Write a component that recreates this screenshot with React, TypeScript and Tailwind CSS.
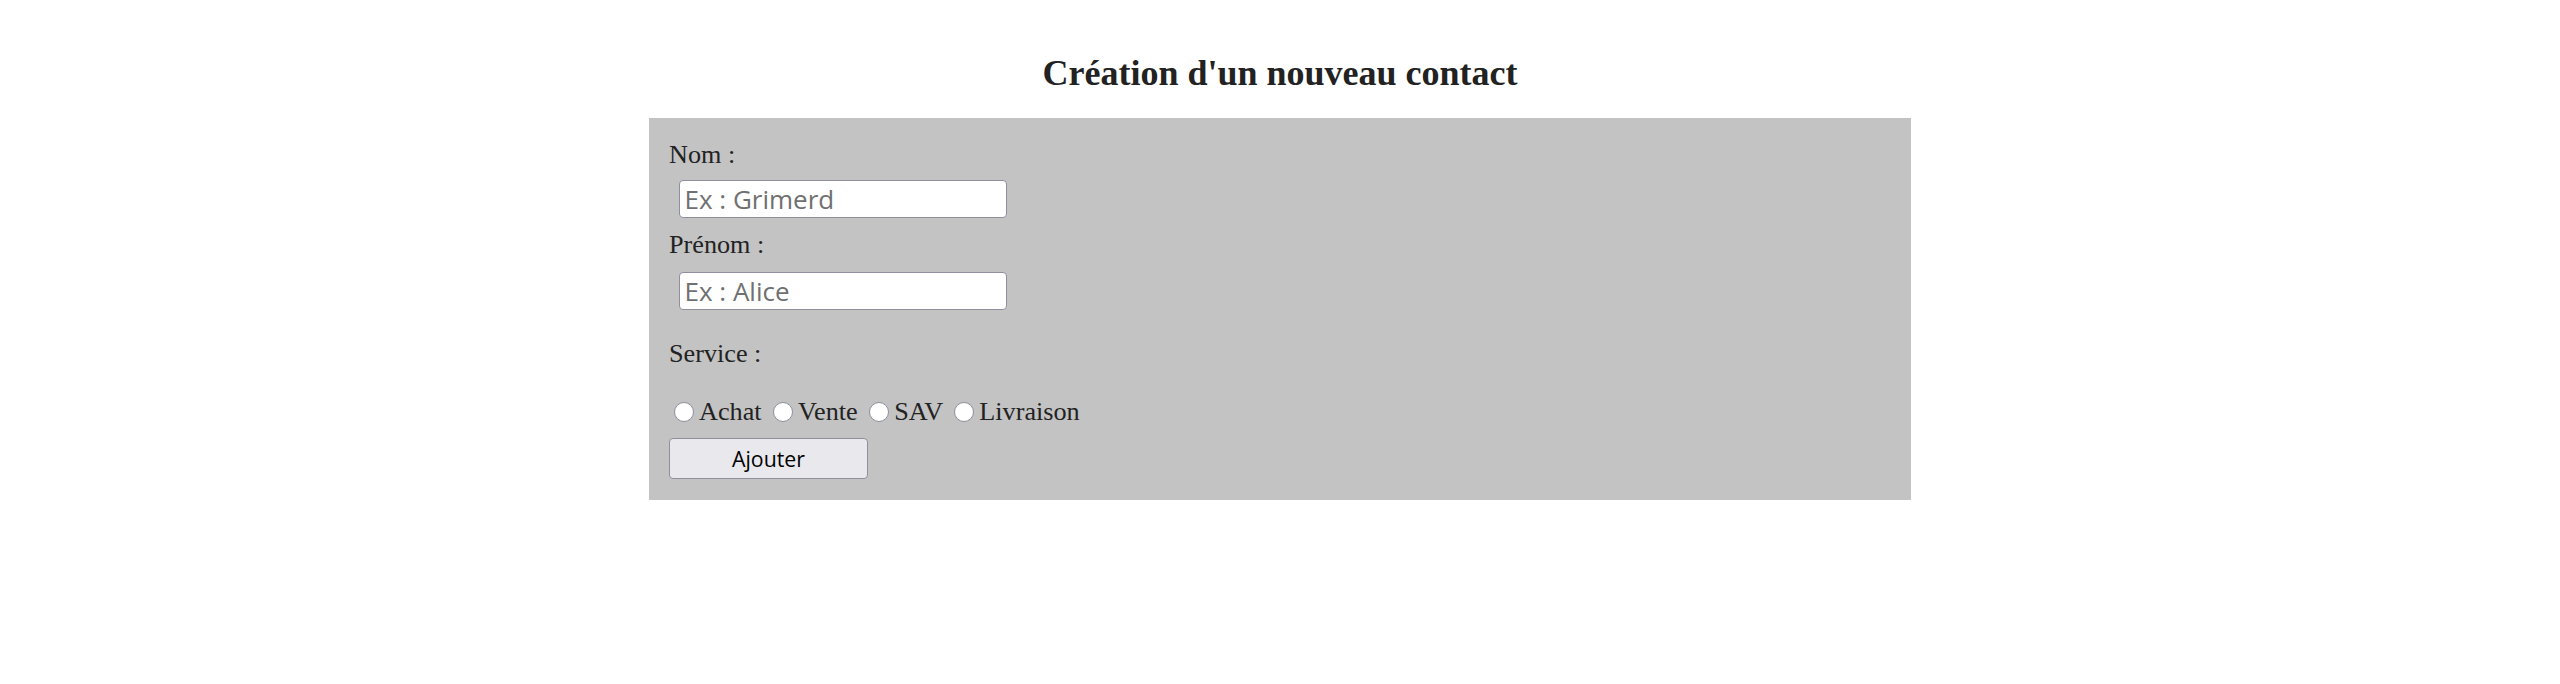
const services = ["Achat", "Vente", "SAV", "Livraison"];

function Label({ text, className }: { text: string; className?: string }) {
    return <div className={`h-[30px] leading-[30px] ${className ?? ""}`}>{text}</div>;
}

function TextInput({ placeholder, className }: { placeholder: string; className?: string }) {
    return (
        <input
            type="text"
            placeholder={placeholder}
            className={`ml-[10px] block w-[328px] h-[38px] rounded-[4px] border-[1.6px] border-[#8f8f9d] bg-white px-[4.5px] text-[26px] text-black outline-none placeholder:text-[#707070] [font-family:'Open_Sans',sans-serif] ${className ?? ""}`}
        />
    );
}

export default function App() {
    return (
        <div className="min-h-[684px] bg-white pt-[53px] text-[#222] [font-family:'Liberation_Serif',serif]">
            {/* Title */}
            <h1 className="text-center text-[36px] font-bold leading-[40px]">Création d'un nouveau contact</h1>

            {/* Form */}
            <form
                className="mx-auto mt-[25px] w-[1262px] bg-[#c3c3c3] px-[20px] pt-[22px] pb-[21px] text-[26.2px]"
                onSubmit={(e) => e.preventDefault()}
            >
                <Label text="Nom :" />
                <TextInput placeholder="Ex : Grimerd" className="mt-[10px]" />
                <Label text="Prénom :" className="mt-[12px]" />
                <TextInput placeholder="Ex : Alice" className="mt-[12px]" />
                <Label text="Service :" className="mt-[29px]" />

                {/* Radios */}
                <div className="mt-[28px] h-[30px] leading-[30px] whitespace-nowrap">
                    {services.map((s, i) => (
                        <label key={s} className="inline">
                            <span className="mx-[5px] inline-block h-[20px] w-[20px] rounded-full border-[1.6px] border-[#8f8f9d] bg-white align-[-2px]" />
                            {s}
                            {i < services.length - 1 ? " " : ""}
                        </label>
                    ))}
                </div>

                <button
                    type="submit"
                    className="mt-[11px] block h-[41px] w-[199px] rounded-[4px] border-[1.6px] border-[#8f8f9d] bg-[#e9e9ed] text-[21.3px] text-black [font-family:'Open_Sans',sans-serif]"
                >
                    Ajouter
                </button>
            </form>
        </div>
    );
}
